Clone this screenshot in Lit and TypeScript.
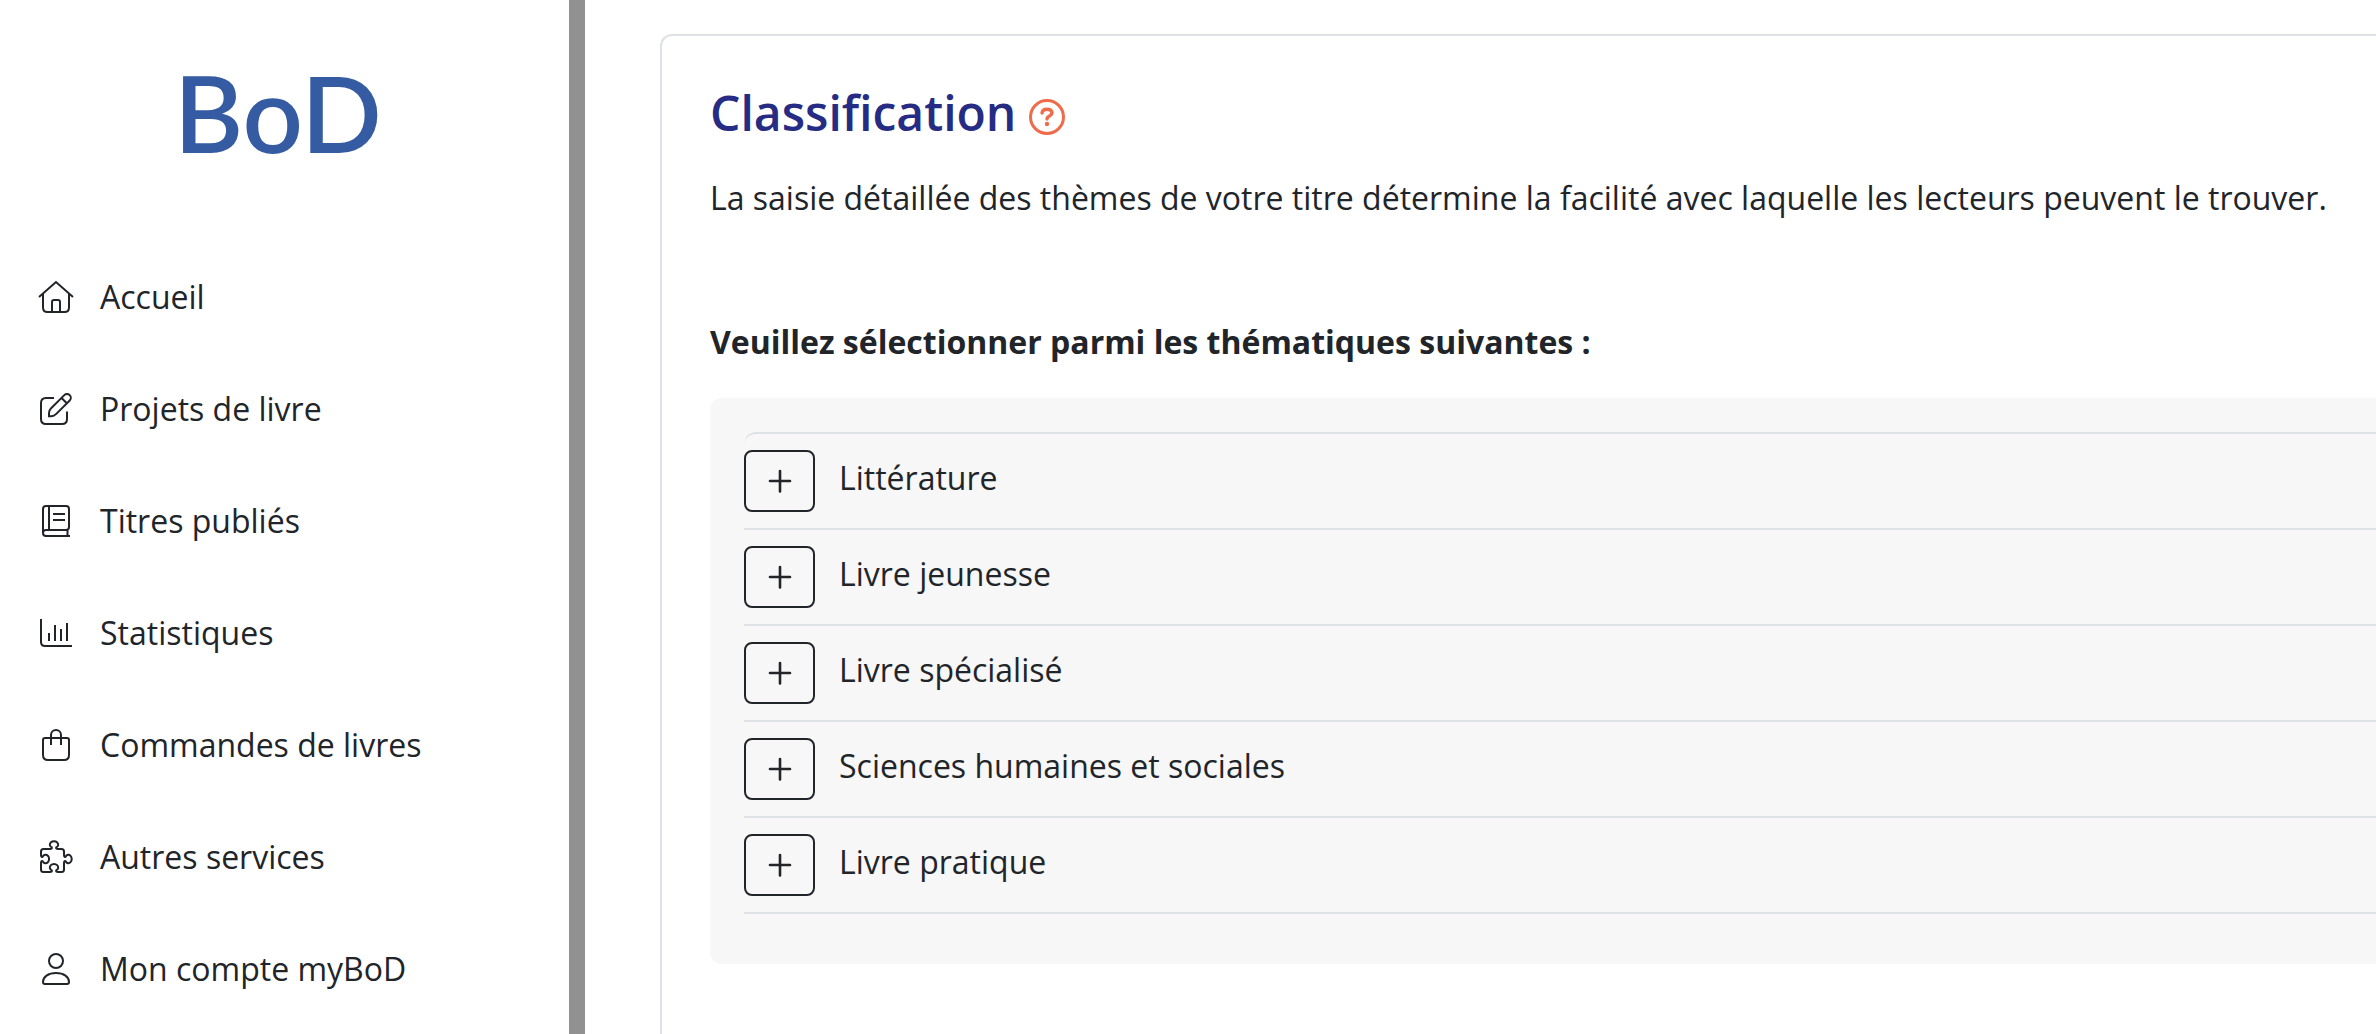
import { LitElement, html, css, svg } from "lit";
import { customElement } from "lit/decorators.js";

const icons = {
  home: svg`<path d="M1 18 18 3l17 15M5 15v13.500q0 4.500 4.500 4.500h17q4.500 0 4.500-4.500V15M14 33V23q0-2 2-2h4q2 0 2 2v10"/>`,
  edit: svg`<path d="M16 7H8Q3 7 3 12v16q0 5 5 5h16q5 0 5-5v-7.500"/><path d="M11 25.200V22q0-2.600 1.900-4.500L26.300 4.100a3.800 3.800 0 0 1 5.400 5.400L18.300 22.900q-2.300 2.300-4.900 2.300zM23.600 7l5.200 5.200"/>`,
  book: svg`<path d="M31 24V6q0-3-3-3H8Q5 3 5 6v24q0 3 3 3h24M5 30q0-3 3-3h20q3 0 3-3M29.500 27v6M11 3v24M15 11h12M15 17h12"/>`,
  chart: svg`<path d="M3 4v23q0 4 4 4h27M11 18v8M17 10v16M23 14v12M29 8v18"/>`,
  bag: svg`<path d="M7 11h22q2 0 2 2v15q0 5-5 5H10q-5 0-5-5V13q0-2 2-2zM13 18V8a5 5 0 0 1 10 0v10"/>`,
  puzzle: svg`<path d="M3 12.500Q3 10 5.500 10H12q2.400 0 1.800-1.600A4.200 3.300 0 1 1 18.200 8.400Q17.600 10 20 10h3.500Q26 10 26 12.500V16q0 2.400 1.600 1.800A3.300 4.200 0 1 1 27.600 22.200Q26 21.600 26 24v6.500Q26 33 23.500 33H20q-2.400 0-1.800-1.600A4.200 3.500 0 1 0 13.800 31.400Q14.400 33 12 33H5.500Q3 33 3 30.500V24q0-2.400 1.600-1.800A3.500 4.200 0 1 0 4.600 17.800Q3 18.400 3 16z"/>`,
  user: svg`<circle cx="18" cy="10" r="7"/><path d="M7 33q-2 0-2-2c0-5 5-9 13-9s13 4 13 9q0 2-2 2z"/>`,
};

const menu = [
  { icon: icons.home, label: "Accueil" },
  { icon: icons.edit, label: "Projets de livre" },
  { icon: icons.book, label: "Titres publiés" },
  { icon: icons.chart, label: "Statistiques" },
  { icon: icons.bag, label: "Commandes de livres" },
  { icon: icons.puzzle, label: "Autres services" },
  { icon: icons.user, label: "Mon compte myBoD" },
];

const topics = [
  "Littérature",
  "Livre jeunesse",
  "Livre spécialisé",
  "Sciences humaines et sociales",
  "Livre pratique",
];

@customElement("app-root")
export class AppRoot extends LitElement {
  static styles = css`
    :host {
      display: flex;
      min-height: 100vh;
      background: #fff;
      color: #212529;
      font: 400 32px/48px "Open Sans", "Noto Sans", sans-serif;
    }
    * { box-sizing: border-box; }
    .side {
      flex: none;
      width: 585px;
      border-right: 16px solid #919191;
    }
    .logo {
      display: block;
      padding: 46px 0 51px 174px;
      color: #355ba3;
      font: 600 106px/132px Lato, sans-serif;
      text-decoration: none;
    }
    .menu { margin: 0; padding: 12px 0 0; list-style: none; }
    .link {
      display: flex;
      align-items: center;
      gap: 26px;
      height: 112px;
      padding-left: 38px;
      color: inherit;
      text-decoration: none;
    }
    svg { display: block; fill: none; stroke: currentColor; stroke-width: 2; }
    .icon { width: 36px; height: 36px; }
    .main { flex: 1; min-width: 0; padding: 34px 0 0 75px; display: flex; }
    .card {
      flex: 1;
      min-width: 0;
      padding: 48px 0 48px 48px;
      border: solid #dee2e6;
      border-width: 2px 0 0 2px;
      border-top-left-radius: 12px;
    }
    .heading { display: flex; align-items: center; gap: 13px; }
    .title { margin: 0; color: #262c83; font-size: 48px; line-height: 58px; font-weight: 600; }
    .help {
      padding: 8px 0 0;
      border: 0;
      background: none;
      color: #ef6c4b;
      cursor: pointer;
    }
    .help svg { stroke-width: 3; }
    .intro { margin: 32px 0 96px; }
    .prompt { margin: 0 0 32px; font-size: 32px; line-height: 48px; font-weight: 700; }
    .panel {
      padding: 34px 0 50px 34px;
      border-top-left-radius: 12px;
      border-bottom-left-radius: 12px;
      background: #f7f7f7;
    }
    .topics { margin: 0; padding: 0; list-style: none; border-top: 2px solid #dee2e6; border-top-left-radius: 12px; }
    .topic {
      display: flex;
      gap: 24px;
      height: 96px;
      padding-top: 16px;
      border-bottom: 2px solid #dee2e6;
    }
    .expand {
      display: grid;
      place-items: center;
      width: 71px;
      height: 62px;
      padding: 0;
      border: 2px solid #212529;
      border-radius: 8px;
      background: none;
      color: inherit;
      cursor: pointer;
    }
    .plus { width: 24px; height: 24px; stroke-width: 2.6; stroke-linecap: round; }
    .name { padding-top: 4px; }
  `;

  render() {
    return html`
      <aside class="side">
        <a class="logo" href="#">BoD</a>
        <nav>
          <ul class="menu">
            ${menu.map(
              (m) => html`<li>
                <a class="link" href="#"><svg class="icon" viewBox="0 0 36 36" aria-hidden="true">${m.icon}</svg><span>${m.label}</span></a>
              </li>`
            )}
          </ul>
        </nav>
      </aside>
      <main class="main">
        <section class="card">
          <div class="heading">
            <h1 class="title">Classification</h1>
            <button class="help" type="button" aria-label="Aide">
              <svg class="icon" viewBox="0 0 36 36" aria-hidden="true">
                <circle cx="18" cy="18" r="16.500" />
                <path d="M13 14q.5-3.800 5-3.800t5 3.400q0 2-2.500 3.400-2.500 1.300-2.500 3" stroke-width="3.400" stroke-linecap="round" />
                <circle cx="18" cy="25" r="2.200" fill="currentColor" stroke="none" />
              </svg>
            </button>
          </div>
          <p class="intro">La saisie détaillée des thèmes de votre titre détermine la facilité avec laquelle les lecteurs peuvent le trouver.</p>
          <h2 class="prompt">Veuillez sélectionner parmi les thématiques suivantes :</h2>
          <div class="panel">
            <ul class="topics">
              ${topics.map(
                (t, i) => html`<li class="topic">
                  <button class="expand" type="button" aria-labelledby="topic-${i}">
                    <svg class="plus" viewBox="0 0 24 24" aria-hidden="true"><path d="M12 2v20.500M2 12h20" /></svg>
                  </button>
                  <span class="name" id="topic-${i}">${t}</span>
                </li>`
              )}
            </ul>
          </div>
        </section>
      </main>
    `;
  }
}
